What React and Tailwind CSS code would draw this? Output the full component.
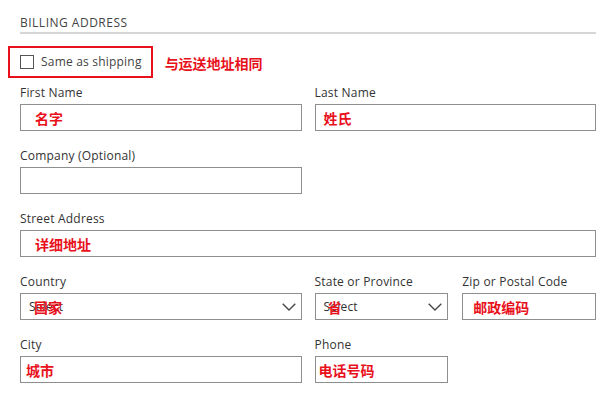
const Note = ({ children, className = '' }) => (
  <span
    className={`font-bold text-[14px] leading-none text-[#e8111b] ${className}`}
    style={{ fontFamily: '"Noto Sans CJK SC", sans-serif' }}
  >
    {children}
  </span>
);

const Field = ({ label, className = '', children }) => (
  <div className={className}>
    <label className="block text-[12px] tracking-[0.2px] leading-4 text-[#333] mb-[3px]">{label}</label>
    {children}
  </div>
);

const Box = ({ children, className = '' }) => (
  <div
    className={`relative h-[27px] border border-[#8e8e8e] bg-white flex items-center ${className}`}
  >
    {children}
  </div>
);

const Chevron = () => (
  <svg className="ml-auto" width="14" height="8" viewBox="0 0 14 8" fill="none">
    <polyline points="0.7,0.7 7,7 13.3,0.7" stroke="#444" strokeWidth="1.3" />
  </svg>
);

const SelectBox = ({ note, noteClass }) => (
  <Box className="pl-2 pr-[5px]">
    <span className="text-[12px] tracking-[0.2px] text-[#333]">Select</span>
    <Note className={`absolute top-[6px] ${noteClass}`}>{note}</Note>
    <Chevron />
  </Box>
);

export default function App() {
  return (
    <div
      className="w-[615px] h-[395px] bg-white pl-5 pr-[19px] pt-[15px] overflow-hidden"
      style={{ fontFamily: '"Open Sans", "Noto Sans CJK SC", sans-serif' }}
    >
      <div className="border-b-2 border-[#d6d6d6] pb-[1px]">
        <h2 className="text-[12px] tracking-[0.5px] leading-4 text-[#444] uppercase">Billing Address</h2>
      </div>

      <div className="flex items-center mt-[12px]">
        <div className="-ml-3 flex items-center gap-[7px] h-[32px] pl-[10px] pr-[9px] border-2 border-[#e8111b]">
          <span className="w-[14px] h-[14px] border border-[#555] bg-white" />
          <span className="text-[12px] tracking-[0.2px] text-[#444]">Same as shipping</span>
        </div>
        <Note className="ml-3 mt-[2px]">与运送地址相同</Note>
      </div>

      <div className="grid grid-cols-2 gap-x-[13px] gap-y-[17px] mt-[7px]">
        <Field label="First Name">
          <Box className="pl-[14px]">
            <Note>名字</Note>
          </Box>
        </Field>
        <Field label="Last Name">
          <Box className="pl-[8px]">
            <Note>姓氏</Note>
          </Box>
        </Field>

        <Field label="Company (Optional)">
          <Box />
        </Field>
        <div />

        <Field label="Street Address" className="col-span-2">
          <Box className="pl-[14px]">
            <Note>详细地址</Note>
          </Box>
        </Field>

        <Field label="Country">
          <SelectBox note="国家" noteClass="left-[13px]" />
        </Field>
        <div className="grid grid-cols-2 gap-x-[14px]">
          <Field label="State or Province">
            <SelectBox note="省" noteClass="left-[12px]" />
          </Field>
          <Field label="Zip or Postal Code">
            <Box className="pl-[10px]">
              <Note>邮政编码</Note>
            </Box>
          </Field>
        </div>

        <Field label="City">
          <Box className="pl-[5px]">
            <Note>城市</Note>
          </Box>
        </Field>
        <div className="grid grid-cols-2 gap-x-[14px]">
          <Field label="Phone">
            <Box className="pl-[3px]">
              <Note>电话号码</Note>
            </Box>
          </Field>
          <div />
        </div>
      </div>
    </div>
  );
}
